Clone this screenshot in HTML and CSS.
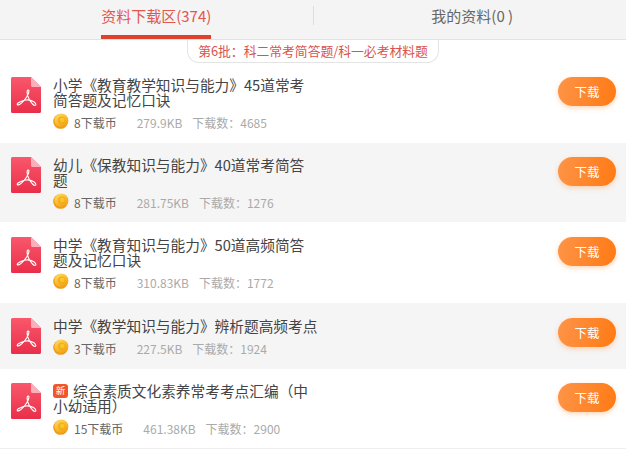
FILE: index.html
```html
<!DOCTYPE html>
<html lang="zh">
<head>
<meta charset="utf-8">
<title>资料下载区</title>
<link rel="stylesheet" href="styles.css">
</head>
<body>
<svg class="defs" width="0" height="0" aria-hidden="true">
  <defs>
    <linearGradient id="g1" x1="0" y1="0" x2="0" y2="1"><stop offset="0" stop-color="#f9586c"/><stop offset="1" stop-color="#e92f4a"/></linearGradient>
    <linearGradient id="gc" x1="0" y1="0" x2="0.6" y2="1"><stop offset="0" stop-color="#fde06a"/><stop offset="1" stop-color="#f3a015"/></linearGradient>
    <symbol id="pdf" viewBox="0 0 30 36">
      <path d="M1.500 0H20L30 10V34.500A1.500 1.500 0 0 1 28.500 36H1.500A1.500 1.500 0 0 1 0 34.500V1.500A1.500 1.500 0 0 1 1.500 0Z" fill="url(#g1)"/>
      <path d="M20 0L30 10H21.500A1.500 1.500 0 0 1 20 8.500Z" fill="#fab0bb"/>
      <path d="M17.500 13C15.200 12.500 16 18.500 18.300 22.500C20 25.500 23.300 29.600 24.600 28.200C26 26.300 20.500 22.200 15 23C11 23.800 5.500 25.800 6.300 27.600C7.600 29.300 13.500 23.800 15.800 19.800C17.300 17 18.800 13.500 17.500 13Z" fill="none" stroke="#fff" stroke-width="1.150" stroke-linejoin="round"/>
    </symbol>
    <symbol id="coin" viewBox="0 0 16 16">
      <circle cx="7.600" cy="8.400" r="7.400" fill="#ef9a12"/>
      <circle cx="8.400" cy="7.400" r="7" fill="url(#gc)"/>
      <circle cx="8.800" cy="7.200" r="3.700" fill="#f4ad12"/>
      <circle cx="9.200" cy="6.800" r="2.400" fill="#f9c52c"/>
    </symbol>
  </defs>
</svg>
<div class="page">
  <nav class="tabs">
    <div class="tab tab-active"><span class="tab-label">资料下载区(374)</span></div>
    <div class="tab-sep"></div>
    <div class="tab tab-mine"><span class="tab-label">我的资料(0 )</span></div>
  </nav>
  <div class="batch-wrap"><div class="batch">第6批：科二常考简答题/科一必考材料题</div></div>
  <ul class="list">
    <li class="row row-1">
      <svg class="pdf"><use href="#pdf"/></svg>
      <div class="info">
        <div class="title">小学《教育教学知识与能力》45道常考简答题及记忆口诀</div>
        <div class="meta"><svg class="coin"><use href="#coin"/></svg><span class="price">8下载币</span><span class="size">279.9KB</span><span class="count">下载数：4685</span></div>
      </div>
      <button class="btn">下载</button>
    </li>
    <li class="row row-2 row-alt">
      <svg class="pdf"><use href="#pdf"/></svg>
      <div class="info">
        <div class="title">幼儿《保教知识与能力》40道常考简答题</div>
        <div class="meta"><svg class="coin"><use href="#coin"/></svg><span class="price">8下载币</span><span class="size">281.75KB</span><span class="count">下载数：1276</span></div>
      </div>
      <button class="btn">下载</button>
    </li>
    <li class="row row-3">
      <svg class="pdf"><use href="#pdf"/></svg>
      <div class="info">
        <div class="title">中学《教育知识与能力》50道高频简答题及记忆口诀</div>
        <div class="meta"><svg class="coin"><use href="#coin"/></svg><span class="price">8下载币</span><span class="size">310.83KB</span><span class="count">下载数：1772</span></div>
      </div>
      <button class="btn">下载</button>
    </li>
    <li class="row row-4 row-alt">
      <svg class="pdf"><use href="#pdf"/></svg>
      <div class="info">
        <div class="title">中学《教学知识与能力》辨析题高频考点</div>
        <div class="meta"><svg class="coin"><use href="#coin"/></svg><span class="price">3下载币</span><span class="size">227.5KB</span><span class="count">下载数：1924</span></div>
      </div>
      <button class="btn">下载</button>
    </li>
    <li class="row row-5">
      <svg class="pdf"><use href="#pdf"/></svg>
      <div class="info">
        <div class="title"><span class="new">新</span>综合素质文化素养常考考点汇编（中小幼适用）</div>
        <div class="meta"><svg class="coin"><use href="#coin"/></svg><span class="price">15下载币</span><span class="size">461.38KB</span><span class="count">下载数：2900</span></div>
      </div>
      <button class="btn">下载</button>
    </li>
  </ul>
</div>
</body>
</html>
```
FILE: styles.css
```css
* { box-sizing: border-box; }
html, body { margin: 0; padding: 0; }
body { width: 628px; height: 450px; overflow: hidden; background: #fff; font-family: "Noto Sans CJK SC", "Noto Sans", sans-serif; }
.defs { display: block; height: 0; }
.page { width: 626px; }
.tabs { height: 40px; display: flex; align-items: stretch; background: #f4f4f4; border-bottom: 1px solid #e2e2e2; }
.tab { flex: 1 1 0; display: flex; justify-content: center; font-size: 15px; color: #666; }
.tab-mine .tab-label { margin-left: 5px; }
.tab-label { height: 39px; line-height: 32px; }
.tab-active .tab-label { color: #e2574c; border-bottom: 4px solid #e0402e; }
.tab-sep { width: 1px; height: 19px; margin-top: 6px; background: #ddd; }
.batch-wrap { height: 23px; display: flex; justify-content: center; }
.batch { width: 252px; height: 23px; line-height: 22px; text-align: center; font-size: 12.800px; color: #d9534a; border: 1px solid #e4e4e4; border-top: 0; border-radius: 0 0 12px 12px; }
.list { list-style: none; margin: 0; padding: 0; }
.row { display: flex; align-items: flex-start; padding-left: 11px; position: relative; }
.row-alt { background: #f5f5f5; }
.row-1 { height: 80px; padding-top: 14px; }
.row-2 { height: 79px; padding-top: 14px; }
.row-3 { height: 81px; padding-top: 15px; }
.row-4 { height: 66px; padding-top: 15px; }
.row-5 { height: 80px; padding-top: 14px; border-bottom: 1px solid #eee; }
.pdf { width: 30px; height: 36px; flex: none; }
.info { width: 265px; margin-left: 12px; }
.title { font-size: 14.700px; line-height: 15px; color: #444; word-break: break-all; }
.new { display: inline-block; width: 15px; height: 14px; line-height: 13px; margin-right: 5px; border-radius: 3px; background: #f0562a; color: #fff; font-size: 9.500px; text-align: center; vertical-align: 3px; }
.meta { display: flex; align-items: center; margin-top: 7px; height: 16px; font-size: 12px; color: #666; }
.coin { width: 16px; height: 16px; flex: none; margin-right: 5px; margin-top: -2px; }
.price { white-space: nowrap; margin-right: 20px; }
.size, .count { color: #aaa; white-space: nowrap; }
.size { margin-right: 10px; }
.btn { position: absolute; right: 10px; top: 14px; width: 58px; height: 29px; border: 0; border-radius: 15px; background: linear-gradient(100deg, #fe9448, #ff7a14); color: #fff; font: 12.500px "Noto Sans CJK SC", sans-serif; box-shadow: 0 2px 5px rgba(255, 140, 60, .35); padding: 0; }
.row-3 .btn, .row-4 .btn { top: 15px; }
```
